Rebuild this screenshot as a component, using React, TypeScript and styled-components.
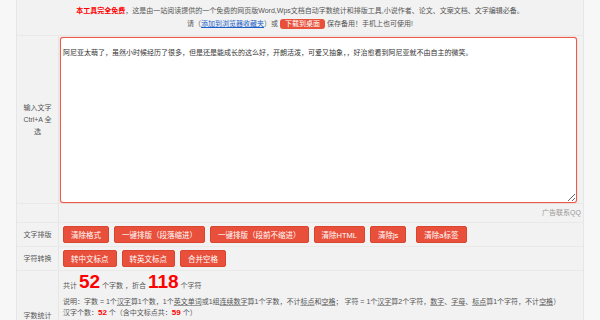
import styled, { createGlobalStyle } from "styled-components";

const sample =
  "阿尼亚太萌了，虽然小时候经历了很多，但是还是能成长的这么好，开朗活泼，可爱又抽象，，好治愈看到阿尼亚就不由自主的微笑。";

export default function App() {
  return (
    <Page>
      <GlobalStyle />
      <Table>
        <Intro>
          <div>
            <Free>本工具完全免费</Free>，这是由一站阅读提供的一个免费的网页版Word,Wps文档自动字数统计和排版工具,小说作者、论文、文案文档、文字编辑必备。
          </div>
          <div>
            请（<Link href="#">添加到浏览器收藏夹</Link>）或 <Download>下载到桌面</Download> 保存备用！手机上也可使用!
          </div>
        </Intro>

        <Label>
          输入文字
          <br />
          Ctrl+A 全选
        </Label>
        <EditorCell>
          <Editor defaultValue={sample} spellCheck={false} />
        </EditorCell>

        <Label />
        <AdCell>广告联系QQ</AdCell>

        <Label>文字排版</Label>
        <Buttons>
          <Button>清除格式</Button>
          <Button>一键排版（段落缩进）</Button>
          <Button>一键排版（段前不缩进）</Button>
          <Button>清除HTML</Button>
          <Button>清除js</Button>
          <Button $gap>清除a标签</Button>
        </Buttons>

        <Label>字符转换</Label>
        <Buttons>
          <Button>转中文标点</Button>
          <Button>转英文标点</Button>
          <Button>合并空格</Button>
        </Buttons>

        <Label>字数统计</Label>
        <Stats>
          <Total>
            共计 <Big>52</Big> 个字数 ，折合 <Big>118</Big> 个字符
          </Total>
          <Line>
            说明：字数 = 1个<U>汉字</U>算1个数，1个<U>英文单词</U>或1组<U>连续数字</U>算1个字数，不计<U>标点</U>和<U>空格</U>； 字符 = 1个<U>汉字</U>算2个字符，<U>数字</U>、<U>字母</U>、<U>标点</U>算1个字符，不计<U>空格</U>）
          </Line>
          <Line>
            汉字个数：<Num>52</Num> 个（含中文标点共：<Num>59</Num> 个）
          </Line>
          <Line>
            英文单词：<Num>0</Num> 个，数字：<Num>0</Num> 个
          </Line>
          <Line>
            标点符号：<Num>7</Num> 个，段落：<Num>1</Num> 个
          </Line>
        </Stats>
      </Table>
    </Page>
  );
}

const GlobalStyle = createGlobalStyle`
  html, body {
    margin: 0;
    padding: 0;
    overflow: hidden;
    background: #f7f7f7;
  }
  body {
    font-family: "Liberation Sans", "Noto Sans CJK SC", sans-serif;
    font-size: 7px;
    color: #555;
  }
`;

const Page = styled.div`
  width: 600px;
  height: 320px;
  padding: 0 16px;
  box-sizing: border-box;
`;

const Table = styled.div`
  display: grid;
  grid-template-columns: 42px 1fr;
  background: #f2f2f2;
  border-left: 1px solid #e6e6e6;
  border-right: 1px solid #e6e6e6;
`;

const Intro = styled.div`
  grid-column: 1 / -1;
  text-align: center;
  line-height: 13px;
  padding: 4px 0 5px;
  border-bottom: 1px solid #e9e9e9;
`;

const Free = styled.b`
  color: #f00;
`;

const Link = styled.a`
  color: #1a5fc9;
`;

const Download = styled.span`
  display: inline-block;
  height: 10px;
  line-height: 10px;
  padding: 0 5px;
  border-radius: 3px;
  background: #e8503a;
  color: #fff;
`;

const Label = styled.div`
  display: flex;
  align-items: center;
  justify-content: center;
  text-align: center;
  line-height: 12px;
  padding: 0 3px;
  border-right: 1px solid #e6e6e6;
  border-bottom: 1px solid #e9e9e9;
`;

const EditorCell = styled.div`
  padding: 1px 6px 0 1px;
  border-bottom: 1px solid #e9e9e9;
`;

const Editor = styled.textarea`
  display: block;
  box-sizing: border-box;
  width: 100%;
  height: 166px;
  margin: 0;
  padding: 10px 2px;
  border: 1px solid #ec5b47;
  border-radius: 3px;
  box-shadow: 0 0 1px #ec5b47;
  background: #fff;
  color: #333;
  font-family: "Liberation Sans", "Noto Sans CJK SC", sans-serif;
  font-size: 7px;
  line-height: 10px;
  outline: none;
`;

const AdCell = styled.div`
  height: 18px;
  line-height: 18px;
  text-align: right;
  padding-right: 2px;
  color: #999;
  border-bottom: 1px solid #e9e9e9;
`;

const Buttons = styled.div`
  display: flex;
  gap: 5px;
  padding: 3px 4px;
  border-bottom: 1px solid #e9e9e9;
`;

const Button = styled.button<{ $gap?: boolean }>`
  height: 17px;
  padding: 0 7px;
  margin-left: ${(p) => (p.$gap ? "5px" : "0")};
  border: 1px solid #d9452f;
  border-radius: 2px;
  background: #e9503b;
  color: #fff;
  font-family: "Liberation Sans", "Noto Sans CJK SC", sans-serif;
  font-size: 7.5px;
  cursor: pointer;
`;

const Stats = styled.div`
  padding: 1px 4px 21px;
  border-bottom: 1px solid #e9e9e9;
`;

const Total = styled.div`
  line-height: 20px;
`;

const Big = styled.b`
  font-family: "Liberation Sans", sans-serif;
  font-size: 19px;
  color: #f00;
`;

const Line = styled.div`
  line-height: 11px;
`;

const U = styled.span`
  text-decoration: underline;
  text-decoration-color: #999;
`;

const Num = styled.b`
  font-size: 8px;
  color: #f00;
`;
